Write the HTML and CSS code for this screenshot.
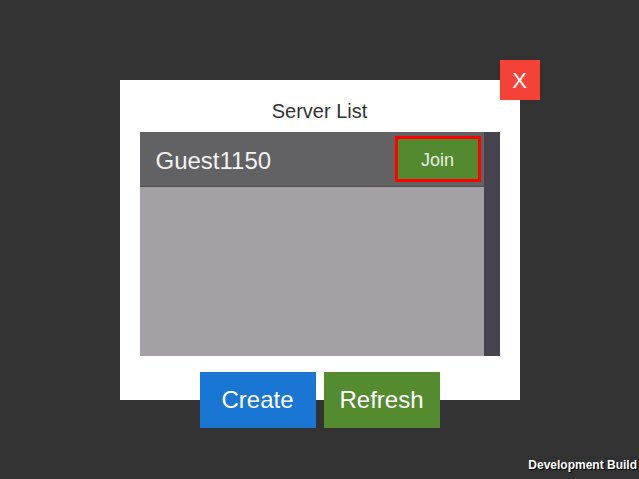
FILE: index.html
```html
<!DOCTYPE html>
<html>
<head>
<meta charset="utf-8">
<link rel="stylesheet" href="styles.css">
</head>
<body>
<div class="panel">
  <div class="title">Server List</div>
  <div class="list">
    <div class="rows">
      <div class="row">
        <span class="name">Guest1150</span>
        <button class="join">Join</button>
      </div>
    </div>
    <div class="scrollbar"></div>
  </div>
  <div class="actions">
    <button class="btn create">Create</button>
    <button class="btn refresh">Refresh</button>
  </div>
  <button class="close">X</button>
</div>
<div class="devbuild">Development Build</div>
</body>
</html>
```
FILE: styles.css
```css
html, body {
  margin: 0;
  padding: 0;
}
body {
  width: 639px;
  height: 479px;
  background: #323232;
  display: flex;
  align-items: center;
  justify-content: center;
  font-family: "Liberation Sans", Arial, sans-serif;
  position: relative;
  overflow: hidden;
}
.panel {
  position: relative;
  width: 400px;
  height: 320px;
  box-sizing: border-box;
  background: #ffffff;
  padding: 10px 20px 0;
  display: flex;
  flex-direction: column;
}
.title {
  height: 42px;
  line-height: 42px;
  text-align: center;
  font-size: 20px;
  color: #323232;
}
.list {
  height: 224px;
  display: flex;
  flex: none;
}
.rows {
  flex: 1;
  background: #a3a0a6;
}
.row {
  height: 54px;
  border-bottom: 1px solid #4d4c52;
  background: #626164;
  display: flex;
  align-items: center;
  justify-content: space-between;
  padding: 0 3px 0 16px;
}
.name {
  font-size: 24px;
  color: #f2f2f2;
  padding-top: 4px;
}
.join {
  width: 86px;
  height: 46px;
  box-sizing: border-box;
  border: 3px solid #ff0000;
  background: #548a2f;
  color: #e8eee2;
  font-family: "Liberation Sans", Arial, sans-serif;
  font-size: 18px;
  padding: 3px 0 0;
}
.scrollbar {
  width: 16px;
  background: #46434f;
}
.actions {
  margin-top: 16px;
  display: flex;
  justify-content: center;
  gap: 8px;
}
.btn {
  width: 116px;
  height: 56px;
  border: none;
  padding: 0;
  color: #ffffff;
  font-family: "Liberation Sans", Arial, sans-serif;
  font-size: 24px;
}
.create {
  background: #1976d2;
}
.refresh {
  background: #558b2f;
}
.close {
  position: absolute;
  top: -20px;
  right: -20px;
  width: 40px;
  height: 40px;
  border: none;
  padding: 2px 0 0;
  background: #f44336;
  color: #ffffff;
  font-family: "Liberation Sans", Arial, sans-serif;
  font-size: 22px;
}
.devbuild {
  position: absolute;
  right: 2px;
  bottom: 7px;
  font-family: "Liberation Sans", Arial, sans-serif;
  font-weight: bold;
  font-size: 12px;
  color: #ffffff;
  text-shadow: 1px 1px 0 #000000;
}
```
